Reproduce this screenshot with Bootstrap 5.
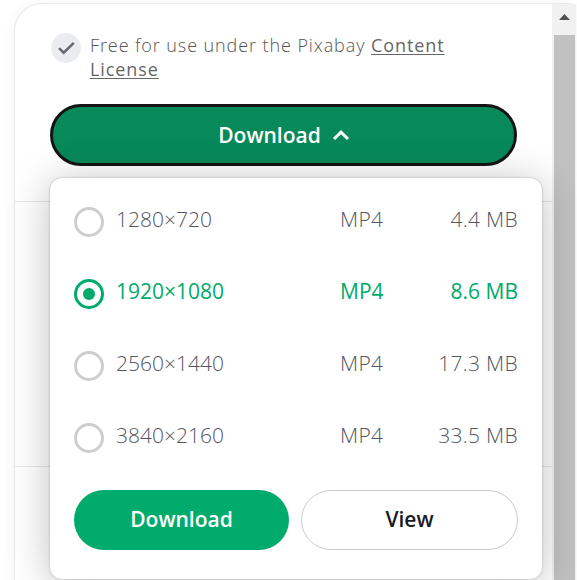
<!DOCTYPE html>
<html lang="en">
<head>
<meta charset="utf-8">
<title>Download options</title>
<link href="https://cdn.jsdelivr.net/npm/bootstrap@5.3.0/dist/css/bootstrap.min.css" rel="stylesheet">
<style>
body{font-family:"Open Sans","Noto Sans",sans-serif;background:#fff;color:#191b26;width:577px;height:580px}
.page{height:580px;padding:3px 1px 0 14px}
.panel{height:620px;border:1px solid #e8e9ea;border-right:0;border-radius:28px 8px 0 0;box-shadow:0 0 16px rgba(0,0,0,.045);background:#fff}
.panel-main{min-width:0}
.section-top{height:198px;padding:29px 35px 0 35px;border-bottom:1px solid #e6e7e8}
.section-mid{height:265px;border-bottom:1px solid #e6e7e8}
.license{font-size:18px;line-height:24px;letter-spacing:.91px;color:#555;font-weight:300;gap:9px;height:71px;padding-left:1px}
.license a{color:#666;font-weight:400;text-decoration-thickness:1px;text-underline-offset:2px}
.tick{width:30px;height:30px}
.cta{height:62px;background:#07895a;border:3px solid #141414;border-radius:31px;color:#fff;font-weight:600;font-size:21px;gap:11px}
.cta span{padding:2px 0 0 1px}
.cta:hover{background:#07895a;color:#fff;border-color:#141414}
.options{left:50px;top:178px;width:492px;height:401px;border-radius:12px;background:#fff;box-shadow:0 0 2px rgba(0,0,0,.3),0 4px 40px rgba(0,0,0,.26);padding:6px 24px 0}
.choice{height:72px;font-size:21px;font-weight:300;color:#55555e;line-height:30px;padding-bottom:2px}
.choice.chosen{color:#00ab6b;font-weight:400}
.ring{width:30px;height:30px;border:3px solid #cdced0;border-radius:50%;margin:6px 12px 0 0}
.chosen .ring{border-color:#00ab6b}
.ring i{width:12px;height:12px;border-radius:50%;background:#00ab6b}
.format{width:44px}
.size{width:134px}
.choice:not(.chosen) .format,.choice:not(.chosen) .size{letter-spacing:.3px}
.actions{gap:12px;margin-top:18px}
.actions .btn{height:60px;border-radius:30px;font-size:21px;font-weight:600}
.fetch{width:215px;background:#00ab6b;color:#fff;border:0}
.view{width:217px;border:1px solid #ccc;color:#191b26;background:#fff}
.scroller{width:24px;background:#f1f1f1;padding:0 1px 0 2px}
.scroller svg{height:31px}
.thumb{background:#c1c1c1}
</style>
</head>
<body class="overflow-hidden position-relative">
<main class="page overflow-hidden">
  <div class="panel d-flex">
    <div class="panel-main flex-grow-1">
      <section class="section-top">
        <div class="license d-flex align-items-start">
          <svg class="tick flex-shrink-0" viewBox="0 0 30 30"><circle cx="15" cy="15" r="15" fill="#ebecf0"/><path d="M8 15.2l4.7 4.5L22.8 9.8" fill="none" stroke="#656872" stroke-width="2.5"/></svg>
          <div>Free for use under the Pixabay <a href="#">Content<br>License</a></div>
        </div>
        <button class="cta btn w-100 p-0 d-flex justify-content-center align-items-center" type="button"><span>Download</span>
          <svg width="18" height="12" viewBox="0 0 18 12"><path d="M2 10l7-6.8L16 10" fill="none" stroke="#fff" stroke-width="3"/></svg>
        </button>
      </section>
      <section class="section-mid"></section>
    </div>
    <div class="scroller d-flex flex-column flex-shrink-0">
      <svg class="flex-shrink-0" viewBox="0 0 21 31"><path d="M5 16l5.5-6L16 16z" fill="#505050"/></svg>
      <div class="thumb flex-grow-1"></div>
    </div>
  </div>
</main>
<div class="options position-absolute">
  <div class="choice d-flex align-items-center"><span class="ring flex-shrink-0"></span><span class="flex-grow-1">1280×720</span><span class="format">MP4</span><span class="size text-end">4.4 MB</span></div>
  <div class="choice chosen d-flex align-items-center"><span class="ring flex-shrink-0 d-flex align-items-center justify-content-center"><i></i></span><span class="flex-grow-1">1920×1080</span><span class="format">MP4</span><span class="size text-end">8.6 MB</span></div>
  <div class="choice d-flex align-items-center"><span class="ring flex-shrink-0"></span><span class="flex-grow-1">2560×1440</span><span class="format">MP4</span><span class="size text-end">17.3 MB</span></div>
  <div class="choice d-flex align-items-center"><span class="ring flex-shrink-0"></span><span class="flex-grow-1">3840×2160</span><span class="format">MP4</span><span class="size text-end">33.5 MB</span></div>
  <div class="actions d-flex">
    <button class="fetch btn p-0" type="button">Download</button>
    <button class="view btn p-0" type="button">View</button>
  </div>
</div>
<script src="https://cdn.jsdelivr.net/npm/bootstrap@5.3.0/dist/js/bootstrap.bundle.min.js"></script>
</body>
</html>
